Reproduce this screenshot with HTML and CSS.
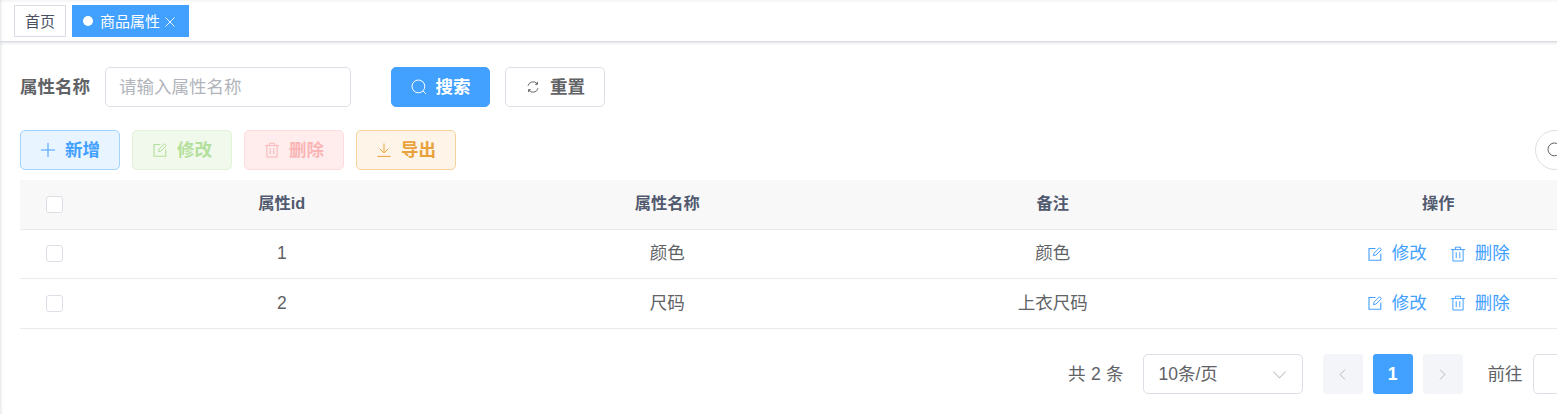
FILE: index.html
```html
<!DOCTYPE html>
<html lang="en">
<head>
    <meta charset="UTF-8">
    <title>商品属性</title>
    <link rel="stylesheet" href="styles.css">
</head>
<body>
    <svg class="defs" width="0" height="0">
        <symbol id="i-search" viewBox="0 0 16 16"><circle cx="7.4" cy="7.4" r="6.4" fill="none" stroke="currentColor" stroke-width="1"/><path d="M12.100 12l2.800 2.900" fill="none" stroke="currentColor" stroke-width="1"/></symbol>
        <symbol id="i-refresh" viewBox="0 0 16 16"><path d="M2.300 6.600A5.900 5.900 0 0 1 12.600 4.200M13.700 9.400A5.900 5.900 0 0 1 3.400 11.800" fill="none" stroke="currentColor" stroke-width="1.100"/><path d="M13.600 1.800v3.600H10zM2.400 14.200v-3.600H6z" fill="currentColor"/></symbol>
        <symbol id="i-plus" viewBox="0 0 16 16"><path d="M8 1v14M1 8h14" fill="none" stroke="currentColor" stroke-width="1"/></symbol>
        <symbol id="i-edit" viewBox="0 0 16 16"><path d="M8.500 2.500H2v11.800h11.800V7.500" fill="none" stroke="currentColor" stroke-width="1.100"/><path d="M6.500 9.600l.5-2.400 5.500-5.500 1.900 1.900-5.500 5.500z" fill="none" stroke="currentColor" stroke-width="1"/></symbol>
        <symbol id="i-delete" viewBox="0 0 16 16"><path d="M1 3.600h14M5.400 3.400V1.200h5.200v2.200M2.900 3.600v11.400h10.200V3.600M6.200 6.200v6M9.800 6.200v6" fill="none" stroke="currentColor" stroke-width="1"/></symbol>
        <symbol id="i-download" viewBox="0 0 16 16"><path d="M8 1.500v9.200M3.800 6.800L8 11l4.200-4.200M1.500 14.400h13" fill="none" stroke="currentColor" stroke-width="1"/></symbol>
        <symbol id="i-close" viewBox="0 0 16 16"><path d="M2 2l12 12M14 2L2 14" fill="none" stroke="currentColor" stroke-width="1.200"/></symbol>
        <symbol id="i-down" viewBox="0 0 16 16"><path d="M1.500 5l6.500 6.500L14.500 5" fill="none" stroke="currentColor" stroke-width="1.100"/></symbol>
        <symbol id="i-left" viewBox="0 0 16 16"><path d="M11 2L5 8l6 6" fill="none" stroke="currentColor" stroke-width="1.200"/></symbol>
        <symbol id="i-right" viewBox="0 0 16 16"><path d="M5 2l6 6-6 6" fill="none" stroke="currentColor" stroke-width="1.200"/></symbol>
    </svg>

    <div class="page">
        <div class="tags-bar">
            <span class="tag"><span class="txt">首页</span></span>
            <span class="tag tag-active">
                <i class="tag-dot"></i><span class="txt">商品属性</span>
                <svg class="tag-close"><use href="#i-close"/></svg>
            </span>
        </div>

        <div class="main">
            <form class="search-form">
                <label class="form-label"><span class="txt">属性名称</span></label>
                <div class="form-input"><span class="txt">请输入属性名称</span></div>
                <button type="button" class="btn btn-primary btn-search"><svg class="ico"><use href="#i-search"/></svg><span class="txt">搜索</span></button>
                <button type="button" class="btn btn-default"><svg class="ico ico-refresh"><use href="#i-refresh"/></svg><span class="txt">重置</span></button>
            </form>

            <div class="toolbar">
                <div class="toolbar-left">
                    <button type="button" class="btn btn-add"><svg class="ico"><use href="#i-plus"/></svg><span class="txt">新增</span></button>
                    <button type="button" class="btn btn-edit"><svg class="ico"><use href="#i-edit"/></svg><span class="txt">修改</span></button>
                    <button type="button" class="btn btn-del"><svg class="ico"><use href="#i-delete"/></svg><span class="txt">删除</span></button>
                    <button type="button" class="btn btn-export"><svg class="ico"><use href="#i-download"/></svg><span class="txt">导出</span></button>
                </div>
                <button type="button" class="btn-circle"><svg class="ico"><use href="#i-search"/></svg></button>
            </div>

            <table class="table">
                <colgroup>
                    <col class="col-check">
                    <col class="col-data">
                    <col class="col-data">
                    <col class="col-data">
                    <col class="col-data">
                </colgroup>
                <thead>
                    <tr>
                        <th><span class="checkbox"></span></th>
                        <th><span class="txt">属性id</span></th>
                        <th><span class="txt">属性名称</span></th>
                        <th><span class="txt">备注</span></th>
                        <th><span class="txt">操作</span></th>
                    </tr>
                </thead>
                <tbody>
                    <tr>
                        <td><span class="checkbox"></span></td>
                        <td>1</td>
                        <td><span class="txt">颜色</span></td>
                        <td><span class="txt">颜色</span></td>
                        <td>
                            <a class="link"><svg class="ico"><use href="#i-edit"/></svg><span class="txt">修改</span></a>
                            <a class="link"><svg class="ico"><use href="#i-delete"/></svg><span class="txt">删除</span></a>
                        </td>
                    </tr>
                    <tr>
                        <td><span class="checkbox"></span></td>
                        <td>2</td>
                        <td><span class="txt">尺码</span></td>
                        <td><span class="txt">上衣尺码</span></td>
                        <td>
                            <a class="link"><svg class="ico"><use href="#i-edit"/></svg><span class="txt">修改</span></a>
                            <a class="link"><svg class="ico"><use href="#i-delete"/></svg><span class="txt">删除</span></a>
                        </td>
                    </tr>
                </tbody>
            </table>

            <div class="pagination">
                <span class="total txt">共 2 条</span>
                <div class="size-select"><span class="txt">10条/页</span><svg class="select-arrow"><use href="#i-down"/></svg></div>
                <span class="pager pager-nav"><svg class="pager-ico"><use href="#i-left"/></svg></span>
                <span class="pager pager-active">1</span>
                <span class="pager pager-nav"><svg class="pager-ico"><use href="#i-right"/></svg></span>
                <span class="jump txt">前往</span>
                <div class="jump-input"></div>
            </div>
        </div>
    </div>
</body>
</html>
```

FILE: styles.css
```css
* {
    box-sizing: border-box;
}

html, body {
    margin: 0;
    height: 100%;
    overflow: hidden;
    background: #fff;
}

body {
    font-family: "Liberation Sans", "Noto Sans CJK SC", sans-serif;
    color: #606266;
}

.defs {
    position: absolute;
}

/* CJK glyphs sit low in this font, lift them a bit */
.txt {
    display: inline-block;
    padding-bottom: 4px;
}

.page {
    width: 1651px;
    height: 414px;
    box-shadow: inset 3px 0 3px -2px rgba(0, 21, 41, .12);
}

.tags-bar {
    display: flex;
    align-items: flex-start;
    gap: 6px;
    height: 42px;
    padding: 5px 0 0 14px;
    border-bottom: 1px solid #d8dce5;
    box-shadow: 0 1px 3px 0 rgba(0, 0, 0, .12), inset 0 3px 3px -2px rgba(0, 0, 0, .06);
}

.tag {
    display: flex;
    align-items: center;
    height: 32px;
    padding: 0 10px;
    font-size: 15px;
    color: #495060;
    background: #fff;
    border: 1px solid #d8dce5;
}

.tag .txt {
    padding-bottom: 2px;
}

.tag-active {
    color: #fff;
    background: #42a0ff;
    border-color: #42a0ff;
}

.tag-dot {
    width: 10px;
    height: 10px;
    margin-right: 7px;
    border-radius: 50%;
    background: #fff;
}

.tag-close {
    width: 12px;
    height: 12px;
    margin-left: 4px;
    margin-right: 2px;
    margin-top: 1px;
}

.main {
    padding: 25px 20px 0;
}

.search-form {
    display: flex;
    align-items: center;
    margin-bottom: 23px;
}

.form-label {
    width: 85px;
    font-size: 17.5px;
    font-weight: 700;
    color: #606266;
}

.form-input {
    display: flex;
    align-items: center;
    width: 246px;
    height: 40px;
    padding: 0 14px 0 13px;
    font-size: 17.5px;
    color: #b1b4bb;
    border: 1px solid #dcdfe6;
    border-radius: 5px;
}

.btn {
    display: inline-flex;
    align-items: center;
    justify-content: center;
    width: 100px;
    height: 40px;
    padding: 0;
    font: 700 17.5px "Liberation Sans", "Noto Sans CJK SC", sans-serif;
    border: 1px solid #dcdfe6;
    border-radius: 5px;
    background: #fff;
}

.ico {
    width: 16px;
    height: 16px;
    margin-right: 9px;
    flex: none;
}

.ico-refresh {
    width: 14px;
    height: 14px;
    margin-left: 1px;
    margin-right: 10px;
}

.btn-primary {
    color: #fff;
    background: #42a0ff;
    border-color: #42a0ff;
}

.btn-search {
    width: 99px;
    margin-left: 40px;
    margin-right: 15px;
}

.btn-default {
    color: #606266;
}

.toolbar {
    display: flex;
    justify-content: space-between;
    align-items: center;
    margin-bottom: 10px;
}

.toolbar-left {
    display: flex;
    gap: 12px;
}

.btn-add {
    color: #42a0ff;
    background: #e8f4ff;
    border-color: #a3d3ff;
}

.btn-edit {
    color: #b3e09c;
    background: #f0f9eb;
    border-color: #e1f3d8;
}

.btn-del {
    color: #f9b5b5;
    background: #ffeded;
    border-color: #ffdbdb;
}

.btn-export {
    color: #e9a23b;
    background: #fff4e8;
    border-color: #f5d39b;
}

.btn-circle {
    display: flex;
    align-items: center;
    justify-content: center;
    width: 40px;
    height: 40px;
    margin-right: 56px;
    padding: 0;
    color: #606266;
    background: #fff;
    border: 1px solid #dcdfe6;
    border-radius: 50%;
}

.btn-circle .ico {
    margin: 0;
}

.table {
    width: 1611px;
    border-collapse: separate;
    border-spacing: 0;
    table-layout: fixed;
}

.col-check {
    width: 69px;
}

.table th,
.table td {
    height: 49.5px;
    padding: 0;
    text-align: center;
    border-bottom: 1px solid #e8eaf0;
}

.table th {
    font-size: 16.25px;
    font-weight: 700;
    color: #515a6e;
    background: #f8f8f9;
}

.table td {
    font-size: 17.5px;
    color: #606266;
}

.checkbox {
    display: block;
    width: 17px;
    height: 17px;
    margin-left: 26px;
    background: #fff;
    border: 1px solid #dcdfe6;
    border-radius: 3px;
}

.link {
    display: inline-flex;
    align-items: center;
    margin: 0 9px;
    font-size: 17.5px;
    color: #42a0ff;
}

.pagination {
    display: flex;
    justify-content: flex-end;
    align-items: center;
    margin-top: 25.5px;
    padding-right: 36.5px;
    font-size: 17.5px;
    color: #606266;
}

.total {
    margin-right: 19px;
    word-spacing: .5px;
}

.size-select {
    display: flex;
    align-items: center;
    justify-content: space-between;
    width: 160px;
    height: 40px;
    margin-right: 20px;
    padding: 0 15px;
    border: 1px solid #dcdfe6;
    border-radius: 5px;
}

.select-arrow {
    width: 15px;
    height: 15px;
    color: #c0c4cc;
}

.pager {
    display: flex;
    align-items: center;
    justify-content: center;
    width: 40px;
    height: 40px;
    margin-right: 10px;
    border-radius: 3px;
    background: #f4f4f5;
}

.pager-nav {
    color: #b4b7bd;
    background: #f4f5f9;
}

.pager-ico {
    width: 13px;
    height: 13px;
}

.pager-active {
    font-weight: 700;
    color: #fff;
    background: #42a0ff;
}

.jump {
    margin-left: 15px;
    margin-right: 10px;
}

.jump-input {
    width: 62px;
    height: 40px;
    border: 1px solid #dcdfe6;
    border-radius: 5px;
}
```
